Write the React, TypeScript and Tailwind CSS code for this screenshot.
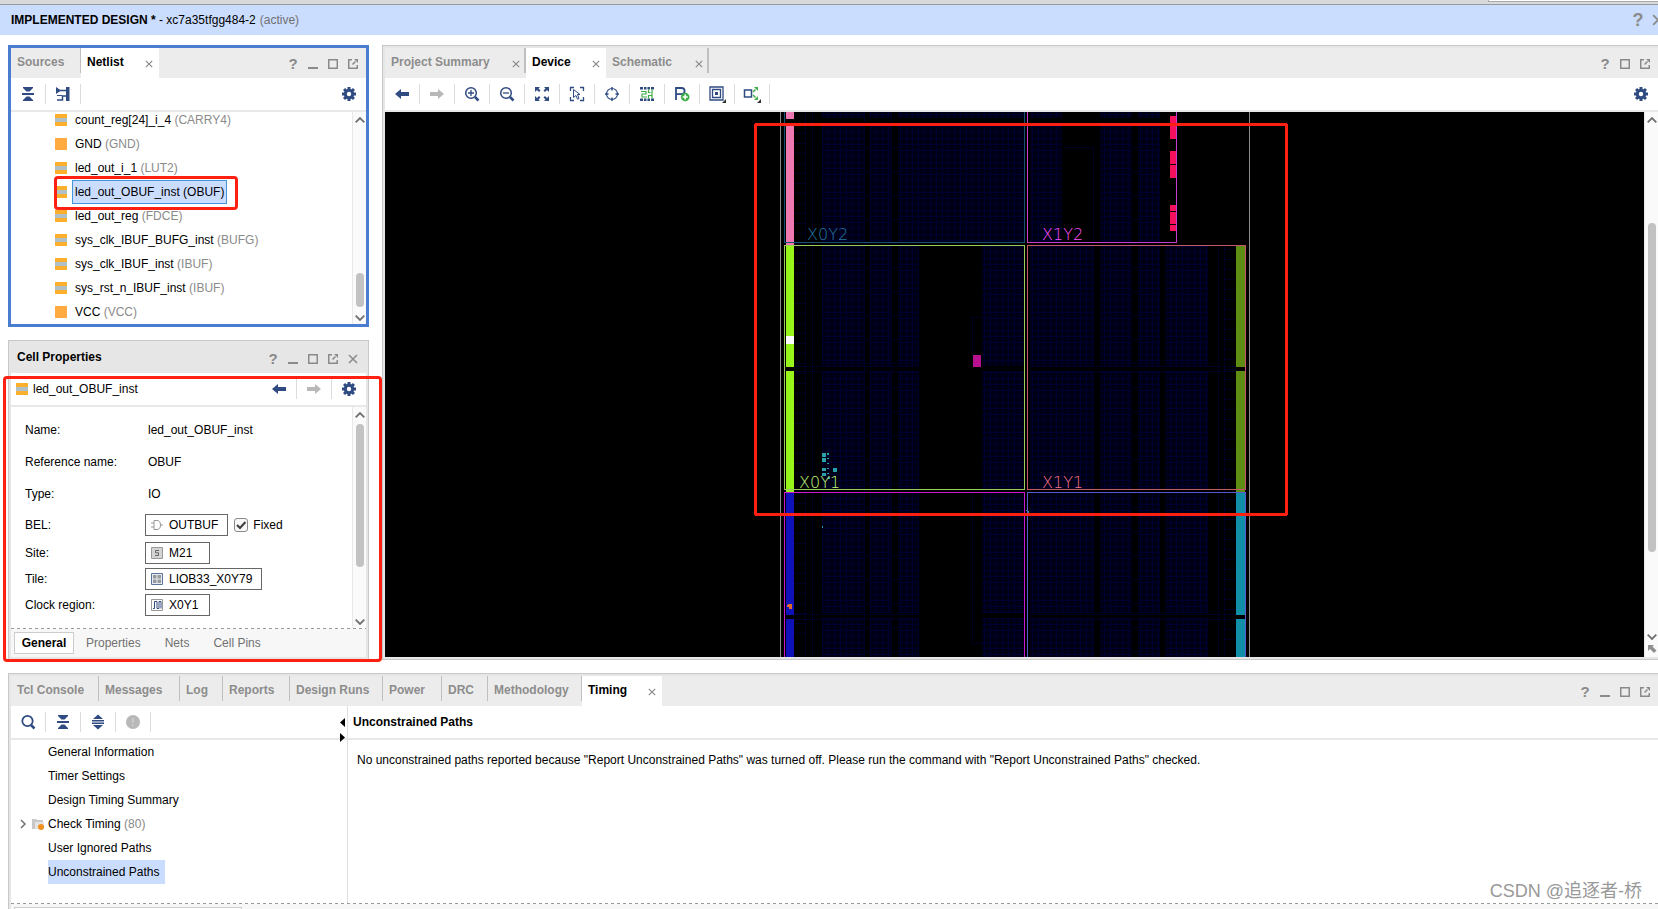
import { useState } from 'react'
import type { ReactNode } from 'react'

type Cell = { name: string; type: string; plain?: boolean }
type TabItem = { label: string; width: string; close?: boolean }
type Rect = [x: number, y: number, w: number, h: number]

const cells: Cell[] = [
  { name: 'count_reg[24]_i_4', type: 'CARRY4' },
  { name: 'GND', type: 'GND', plain: true },
  { name: 'led_out_i_1', type: 'LUT2' },
  { name: 'led_out_OBUF_inst', type: 'OBUF' },
  { name: 'led_out_reg', type: 'FDCE' },
  { name: 'sys_clk_IBUF_BUFG_inst', type: 'BUFG' },
  { name: 'sys_clk_IBUF_inst', type: 'IBUF' },
  { name: 'sys_rst_n_IBUF_inst', type: 'IBUF' },
  { name: 'VCC', type: 'VCC', plain: true },
]

const netlistTabs: TabItem[] = [
  { label: 'Sources', width: 'w-[70px]' },
  { label: 'Netlist', width: 'w-[78px]', close: true },
]

const deviceTabs: TabItem[] = [
  { label: 'Project Summary', width: 'w-[141px]', close: true },
  { label: 'Device', width: 'w-[80px]', close: true },
  { label: 'Schematic', width: 'w-[103px]', close: true },
]

const resultTabs: TabItem[] = [
  { label: 'Tcl Console', width: 'w-[88px]' },
  { label: 'Messages', width: 'w-[81px]' },
  { label: 'Log', width: 'w-[43px]' },
  { label: 'Reports', width: 'w-[67px]' },
  { label: 'Design Runs', width: 'w-[93px]' },
  { label: 'Power', width: 'w-[59px]' },
  { label: 'DRC', width: 'w-[46px]' },
  { label: 'Methodology', width: 'w-[94px]' },
  { label: 'Timing', width: 'w-[80px]', close: true },
]

const timingItems = [
  'General Information',
  'Timer Settings',
  'Design Timing Summary',
  'Check Timing',
  'User Ignored Paths',
  'Unconstrained Paths',
]

const NAVY = '#2f4b82'
const GREEN = '#3fae49'

/* ---------- icons ---------- */

function Icon({ size = 16, children }: { size?: number; children: ReactNode }) {
  return (
    <svg width={size} height={size} viewBox={`0 0 ${size} ${size}`} fill="none" aria-hidden="true">
      {children}
    </svg>
  )
}

const GearIcon = () => (
  <Icon>
    <g fill={NAVY}>
      <circle cx="8" cy="8" r="5.2" />
      {[0, 45, 90, 135].map(a => (
        <rect key={a} x="6.5" y="1" width="3" height="14" transform={`rotate(${a} 8 8)`} />
      ))}
    </g>
    <circle cx="8" cy="8" r="2.2" fill="#fff" />
  </Icon>
)

const CollapseIcon = () => (
  <Icon>
    <path d="M3 1h10v1L9.500 5.500h-3L3 2zM3 15h10v-1L9.500 10.500h-3L3 14zM2 7h12v2H2z" fill={NAVY} />
  </Icon>
)

const ExpandIcon = () => (
  <Icon>
    <path d="M8 .5l5 4.500H3zM8 15.500l5-4.500H3zM2 6h12v1.500H2zM2 8.500h12V10H2z" fill={NAVY} />
  </Icon>
)

const HierarchyIcon = () => (
  <Icon>
    <path d="M1 1l5 3.500L1 8z" fill={NAVY} />
    <path d="M11 1h3.500v14H11z" fill={NAVY} />
    <path d="M5 4.500h6M2 14h5.500v-4H11" stroke={NAVY} strokeWidth="1.500" />
    <path d="M2 9.500h5" stroke={NAVY} />
  </Icon>
)

const BackIcon = () => (
  <Icon>
    <path d="M1 8l6-5v3h8v4H7v3z" fill={NAVY} />
  </Icon>
)

const ForwardIcon = () => (
  <Icon>
    <path d="M15 8L9 3v3H1v4h8v3z" fill="#b8b8b8" />
  </Icon>
)

const ZoomIcon = ({ plus }: { plus?: boolean }) => (
  <Icon>
    <circle cx="7" cy="7" r="5.300" stroke={NAVY} strokeWidth="1.500" />
    <path d="M11 11l3.500 3.500" stroke={NAVY} strokeWidth="2.500" />
    <path d={plus ? 'M4 7h6M7 4v6' : 'M4 7h6'} stroke={NAVY} strokeWidth="1.300" />
  </Icon>
)

const FitIcon = () => (
  <Icon>
    <path d="M1 1h5L4.500 2.500l2 2-1.500 1.500-2-2L1 6zM15 1h-5l1.500 1.500-2 2L11 6l2-2 2 2zM1 15h5l-1.500-1.500 2-2L5 10l-2 2-2-2zM15 15h-5l1.500-1.500-2-2L11 10l2 2 2-2z" fill={NAVY} />
  </Icon>
)

const SelectAreaIcon = () => (
  <Icon>
    <path d="M1.500 5V1.500H5M11 1.500h3.500V5M1.500 11v3.500H5M14.500 11v3.500H11" stroke={NAVY} strokeWidth="1.300" />
    <path d="M4.500 3.500l6.500 5H8.500l1.500 4-1.500.7L7 9.500l-2.500 2z" stroke={NAVY} fill="#fff" />
  </Icon>
)

const TargetIcon = () => (
  <Icon>
    <circle cx="8" cy="8" r="5.500" stroke={NAVY} strokeWidth="1.200" />
    <path d="M8 1v3.500M8 11.500V15M1 8h3.500M11.500 8H15" stroke={NAVY} strokeWidth="1.500" />
  </Icon>
)

// two routed wires between the rows of pins
const RoutingIcon = () => (
  <Icon>
    <path d="M1 1h3v2.500H1zM5 1h2.500v2.500H5zM8.500 1H11v2.500H8.500zM12 1h3v2.500h-3zM1 12.500h3V15H1zM5 12.500h2.500V15H5zM8.500 12.500H11V15H8.500zM12 12.500h3V15h-3z" fill={NAVY} />
    <path d="M2 5.500h5V8H3v3h5M9.500 3.500v3h2M13 3.500v9M9.500 12.500V9.500H13" stroke={GREEN} strokeWidth="1.200" />
  </Icon>
)

const PblockIcon = () => (
  <Icon>
    <path d="M2 14V2h5.500a3 3 0 010 6.200H2" stroke={NAVY} strokeWidth="1.800" />
    <circle cx="11.200" cy="11" r="4.300" fill={GREEN} />
    <path d="M8.700 11h5M11.200 8.500v5" stroke="#fff" strokeWidth="1.500" />
  </Icon>
)

const LayersIcon = () => (
  <Icon size={18}>
    <path d="M2 2h13v13H2zM4.500 4.500h8v8h-8z" stroke={NAVY} strokeWidth="1.300" />
    <path d="M7 7h3v3H7z" fill={NAVY} />
    <path d="M18 14v4h-4z" fill="#333" />
  </Icon>
)

const ConnectIcon = () => (
  <Icon size={18}>
    <path d="M1.500 5h7v7h-7z" stroke={NAVY} strokeWidth="1.500" />
    <path d="M10 7l2.500-2.500M10 10l2.500 2.500" stroke={GREEN} strokeWidth="1.500" />
    <path d="M15 2v4l-4-4zM15 15v-4l-4 4z" fill={GREEN} />
    <path d="M18 14v4h-4z" fill="#333" />
  </Icon>
)

const SearchIcon = () => (
  <Icon>
    <circle cx="7.500" cy="7" r="5.200" stroke={NAVY} strokeWidth="1.800" />
    <path d="M11 11l3.500 3.500" stroke={NAVY} strokeWidth="2.500" />
  </Icon>
)

const AlertIcon = () => (
  <Icon>
    <circle cx="8" cy="8" r="7" fill="#b8b8b8" />
    <path d="M8 4v5M8 10.500v1.500" stroke="#d0d0d0" strokeWidth="1.500" />
  </Icon>
)

const CellIcon = ({ plain }: { plain?: boolean }) => (
  <Icon size={12}>
    <path d="M0 0h12v12H0z" fill={plain ? '#ffab40' : '#fbb02d'} />
    {!plain && <path d="M0 4h12v4H0z" fill="#b0c0c8" />}
  </Icon>
)

const BelIcon = () => (
  <Icon size={12}>
    <path d="M3 1.500h3a3.500 4.500 0 010 9H3zM0 4h3M0 8h3M9.500 6H12" stroke="#999" />
  </Icon>
)

const SiteIcon = () => (
  <Icon size={12}>
    <path d="M.5.5h11v11H.5z" fill="#d4d4d4" stroke="#999" />
    <path d="M8 3.500H4.500v2.300h3v2.700H4" stroke="#666" />
  </Icon>
)

const TileIcon = () => (
  <Icon size={12}>
    <path d="M.5.5h11v11H.5z" fill="#e6ecf5" stroke="#5b7299" />
    <path d="M2 2h3.500v3.500H2zM6.500 2H10v3.500H6.500zM2 6.500h3.500V10H2zM6.500 6.500H10V10H6.500z" fill="#999" />
  </Icon>
)

const ClockIcon = () => (
  <Icon size={12}>
    <path d="M.5.5h11v11H.5z" stroke="#999" />
    <path d="M2 9.500h1.500v-7H6v7h2v-7h2v7" stroke={NAVY} />
  </Icon>
)

const FolderIcon = () => (
  <Icon size={12}>
    <path d="M0 1h4l1 1h6v9H0z" fill="#c8c8c8" />
    <path d="M3 4h9v7H3z" fill="#e4e4e4" />
    <circle cx="9" cy="9" r="3" fill="#f0901e" />
  </Icon>
)

const CloseIcon = ({ size = 10 }: { size?: number }) => (
  <svg width={size} height={size} viewBox="0 0 10 10" className="shrink-0" aria-hidden="true">
    <path d="M1 1l8 8M9 1L1 9" stroke="#8a8a8a" strokeWidth="1.500" />
  </svg>
)

const MinimizeIcon = () => (
  <Icon size={10}>
    <path d="M0 9h10" stroke="#8a8a8a" strokeWidth="2" />
  </Icon>
)

const MaximizeIcon = () => (
  <Icon size={10}>
    <path d="M.75.75h8.500v8.500H.75z" stroke="#8a8a8a" strokeWidth="1.500" />
  </Icon>
)

const FloatIcon = () => (
  <Icon size={10}>
    <path d="M4 .75H.75v8.500h8.500V6M4.500 5.500L7.500 2.500" stroke="#8a8a8a" strokeWidth="1.500" />
    <path d="M6 0h4v4z" fill="#8a8a8a" />
  </Icon>
)

const Chevron = ({ down }: { down?: boolean }) => (
  <svg width="10" height="6" viewBox="0 0 10 6" fill="none" aria-hidden="true">
    <path d={down ? 'M.7.7L5 5 9.300.7' : 'M.7 5.300L5 1l4.300 4.300'} stroke="#707070" strokeWidth="1.800" />
  </svg>
)

/* ---------- shared parts ---------- */

function ToolButton({ label, children, last }: { label: string; children: ReactNode; last?: boolean }) {
  return (
    <button
      type="button"
      aria-label={label}
      className={`flex h-5 shrink-0 items-center justify-center ${last ? 'w-[34px]' : 'w-[35px] border-r border-[#dcdcdc]'}`}
    >
      {children}
    </button>
  )
}

function WindowButtons({ minimize, close }: { minimize?: boolean; close?: boolean }) {
  const button = 'flex h-5 w-5 items-center justify-center'
  return (
    <div className="ml-auto flex items-center pt-0.5 pr-[3px]">
      <button type="button" className={`${button} text-[15px] font-bold text-[#8a8a8a]`}>?</button>
      {minimize && <button type="button" aria-label="Minimize" className={button}><MinimizeIcon /></button>}
      <button type="button" aria-label="Maximize" className={button}><MaximizeIcon /></button>
      <button type="button" aria-label="Float" className={button}><FloatIcon /></button>
      {close && <button type="button" aria-label="Close" className={button}><CloseIcon /></button>}
    </div>
  )
}

function TabBar({ tabs, initial, minimize, divider }: { tabs: TabItem[]; initial: string; minimize?: boolean; divider: string }) {
  const [active, setActive] = useState(initial)
  return (
    <div className="flex h-[30px] shrink-0 bg-[#ececec]">
      {tabs.map(tab => {
        const isActive = tab.label === active
        return (
          <div key={tab.label} className={`relative flex h-[30px] shrink-0 ${tab.width} ${isActive ? 'bg-white' : ''}`}>
            <button
              type="button"
              onClick={() => setActive(tab.label)}
              className={`h-[27px] flex-1 pl-1.5 text-left font-bold whitespace-nowrap ${isActive ? 'text-black' : 'text-[#8c8c8c]'}`}
            >
              {tab.label}
            </button>
            {tab.close && (
              <button type="button" aria-label="Close tab" className="flex w-5 items-center justify-center pt-0.5">
                <CloseIcon size={8} />
              </button>
            )}
            {!isActive && <span className={`absolute top-0 right-0 h-[25px] bg-[#c0c0c0] ${divider}`} />}
          </div>
        )
      })}
      <WindowButtons minimize={minimize} />
    </div>
  )
}

function ScrollBar({ thumb, children }: { thumb: string; children?: ReactNode }) {
  return (
    <div className="flex w-3.5 shrink-0 flex-col items-center border-l border-[#e8e8e8] bg-[#fafafa]">
      <button type="button" aria-label="Scroll up" className="flex h-4 shrink-0 items-center"><Chevron /></button>
      <div className={`w-2 shrink-0 rounded-full bg-[#c2c2c2] ${thumb}`} />
      <button type="button" aria-label="Scroll down" className="mt-auto flex h-3 shrink-0 items-center"><Chevron down /></button>
      {children}
    </div>
  )
}

const DashedLine = () => (
  <div className="h-px shrink-0 bg-[repeating-linear-gradient(90deg,#999_0_3px,transparent_3px_6px)]" />
)

/* ---------- panels ---------- */

function NetlistPanel() {
  const [selected, setSelected] = useState('led_out_OBUF_inst')
  return (
    <section className="relative flex h-[282px] shrink-0 flex-col border-3 border-[#4a7dd0] bg-white">
      <TabBar tabs={netlistTabs} initial="Netlist" minimize divider="w-px" />
      <div className="flex h-[34px] shrink-0 items-center border-b-2 border-[#e8e8e8]">
        <ToolButton label="Collapse all"><CollapseIcon /></ToolButton>
        <ToolButton label="Show hierarchy"><HierarchyIcon /></ToolButton>
        <div className="flex-1" />
        <ToolButton label="Settings" last><GearIcon /></ToolButton>
      </div>
      <div className="flex min-h-0 flex-1">
        <ul className="flex flex-1 flex-col justify-end overflow-hidden">
          {cells.map(cell => {
            const isSelected = cell.name === selected
            return (
              <li key={cell.name} className="flex h-6 shrink-0 items-center pl-11">
                <CellIcon plain={cell.plain} />
                <button
                  type="button"
                  onClick={() => setSelected(cell.name)}
                  className={`ml-[5px] h-6 border px-0.5 whitespace-nowrap ${isSelected ? 'border-[#4596d8] bg-[#cbddff]' : 'border-transparent'}`}
                >
                  {cell.name} <span className={isSelected ? '' : 'text-[#8a8a8a]'}>({cell.type})</span>
                </button>
              </li>
            )
          })}
        </ul>
        <ScrollBar thumb="mt-[145px] h-[34px]" />
      </div>
      <div className="pointer-events-none absolute top-32 left-[43px] h-[34px] w-[184px] rounded-sm border-3 border-[#ff2012]" />
    </section>
  )
}

function LocationBox({ icon, text }: { icon: ReactNode; text: string }) {
  return (
    <button type="button" className="flex h-[22px] min-w-[65px] items-center gap-1.5 border border-[#666] pr-[9px] pl-[5px]">
      {icon}
      {text}
    </button>
  )
}

function CellPropertiesPanel() {
  const [fixed, setFixed] = useState(true)
  const [tab, setTab] = useState('General')
  const label = 'w-[123px] shrink-0'
  return (
    <section className="relative flex min-h-0 flex-1 flex-col border border-[#c8c8c8]">
      <div className="flex min-h-0 flex-1 flex-col border-2 border-[#e6e6e6] bg-white">
        <div className="flex h-[30px] shrink-0 items-center bg-[#e6e6e6]">
          <h2 className="pb-0.5 pl-1.5 font-bold">Cell Properties</h2>
          <WindowButtons minimize close />
        </div>
        <div className="flex h-[34px] shrink-0 items-center border-b-2 border-[#e8e8e8] pl-[5px]">
          <CellIcon />
          <span className="ml-[5px] flex-1">led_out_OBUF_inst</span>
          <ToolButton label="Previous"><BackIcon /></ToolButton>
          <ToolButton label="Next"><ForwardIcon /></ToolButton>
          <ToolButton label="Settings" last><GearIcon /></ToolButton>
        </div>
        <div className="flex min-h-0 flex-1">
          <div className="flex-1 overflow-hidden pt-[7px] pl-3.5">
            <div className="flex h-8 items-center"><span className={label}>Name:</span>led_out_OBUF_inst</div>
            <div className="flex h-8 items-center"><span className={label}>Reference name:</span>OBUF</div>
            <div className="flex h-8 items-center"><span className={label}>Type:</span>IO</div>
            <div className="flex h-[30px] items-center">
              <span className="w-30 shrink-0">BEL:</span>
              <LocationBox icon={<BelIcon />} text="OUTBUF" />
              <label className="ml-1.5 flex items-center gap-[5px]">
                <span className="grid size-3.5 place-items-center">
                  <input
                    type="checkbox"
                    checked={fixed}
                    onChange={e => setFixed(e.target.checked)}
                    className="col-start-1 row-start-1 size-3.5 appearance-none rounded-[3px] border border-[#8a8a8a] bg-[#f8f8f8]"
                  />
                  {fixed && (
                    <svg width="10" height="10" viewBox="0 0 10 10" fill="none" className="pointer-events-none col-start-1 row-start-1">
                      <path d="M1 5l3 3 5.500-6" stroke="#404040" strokeWidth="2.200" />
                    </svg>
                  )}
                </span>
                Fixed
              </label>
            </div>
            <div className="flex h-[26px] items-center">
              <span className="w-30 shrink-0">Site:</span>
              <LocationBox icon={<SiteIcon />} text="M21" />
            </div>
            <div className="flex h-[26px] items-center">
              <span className="w-30 shrink-0">Tile:</span>
              <LocationBox icon={<TileIcon />} text="LIOB33_X0Y79" />
            </div>
            <div className="flex h-[26px] items-center">
              <span className="w-30 shrink-0">Clock region:</span>
              <LocationBox icon={<ClockIcon />} text="X0Y1" />
            </div>
          </div>
          <ScrollBar thumb="mt-px h-[143px]" />
        </div>
        <DashedLine />
        <div className="flex h-7 shrink-0 items-center bg-[#f7f7f7] pl-[3px]">
          {['General', 'Properties', 'Nets', 'Cell Pins'].map(name => (
            <button
              key={name}
              type="button"
              onClick={() => setTab(name)}
              className={name === tab ? 'h-[22px] min-w-[60px] border border-[#ccc] bg-white px-1.5 font-bold' : 'h-[22px] px-3 text-[#707070]'}
            >
              {name}
            </button>
          ))}
        </div>
      </div>
      <div className="pointer-events-none absolute top-[35px] -right-3.5 -bottom-[3px] -left-1.5 z-10 rounded-sm border-3 border-[#ff2012]" />
    </section>
  )
}

// fabric columns of the die, split per clock region row
const rows: [number, number][] = [[112, 6], [126, 116], [246, 120], [371, 118], [493, 120], [618, 39]]
const leftCols: [number, number][] = [[822, 43], [870, 22], [898, 21], [982, 42]]
const rightCols: [number, number][] = [[1030, 64], [1100, 32], [1138, 22], [1165, 43]]
const topCols: [number, number][] = [[822, 43], [870, 22], [898, 126], [1030, 32], [1100, 32], [1138, 22]]

const tealCells: Rect[] = [
  [822, 453, 4, 4], [822, 458, 4, 4], [822, 468, 4, 3], [822, 473, 4, 3],
  [827, 453, 2, 2], [827, 458, 2, 1], [827, 463, 2, 1], [827, 468, 2, 1], [827, 473, 2, 1],
  [833, 468, 4, 4], [828, 477, 2, 2], [822, 526, 1, 2], [1026, 510, 1, 1], [1027, 511, 2, 2],
]
const redCells: Rect[] = [
  [1170, 116, 6, 23], [1170, 151, 6, 13], [1170, 165, 6, 13],
  [1170, 205, 6, 6], [1170, 212, 6, 12], [1170, 225, 6, 6],
]
const ioBanks: { rect: Rect; fill: string }[] = [
  { rect: [786, 112, 8, 7], fill: '#f078b0' },
  { rect: [786, 123, 8, 122], fill: '#f078b0' },
  { rect: [786, 245, 8, 122], fill: '#98f51a' },
  { rect: [786, 371, 8, 121], fill: '#98f51a' },
  { rect: [786, 336, 8, 8], fill: '#ffffff' },
  { rect: [786, 492, 8, 123], fill: '#1010b8' },
  { rect: [786, 619, 8, 38], fill: '#1010b8' },
  { rect: [1236, 245, 9, 122], fill: '#5f8c12' },
  { rect: [1236, 371, 9, 121], fill: '#5f8c12' },
  { rect: [1236, 492, 9, 123], fill: '#118fa9' },
  { rect: [1236, 619, 9, 38], fill: '#118fa9' },
  { rect: [973, 355, 8, 12], fill: '#b8108e' },
]
const clockRegions: { rect: Rect; stroke: string }[] = [
  { rect: [784, 100, 240, 142], stroke: '#145070' },
  { rect: [1027, 100, 149, 142], stroke: '#cc3ccc' },
  { rect: [784, 245, 240, 244], stroke: '#9bcc5a' },
  { rect: [1027, 245, 218, 244], stroke: '#c4586a' },
  { rect: [784, 492, 240, 200], stroke: '#cc18cc' },
  { rect: [1027, 492, 218, 200], stroke: '#5858d0' },
]
const regionLabels = [
  { text: 'X0Y2', x: 807, y: 240, fill: '#2478a4' },
  { text: 'X1Y2', x: 1042, y: 240, fill: '#ff50ff' },
  { text: 'X0Y1', x: 799, y: 488, fill: '#c0f878' },
  { text: 'X1Y1', x: 1042, y: 488, fill: '#f87088' },
]

function Die() {
  return (
    <svg width="549" height="545" viewBox="740 112 549 545" className="shrink-0" shapeRendering="crispEdges">
      <defs>
        <pattern id="clb" width="6" height="6" patternUnits="userSpaceOnUse">
          <path d="M0 0h6v6H0z" fill="#000014" />
          <path d="M0 0h6v1H1v5H0z" fill="#000030" />
        </pattern>
      </defs>
      {rows.map(([y, h], i) =>
        (i < 2 ? topCols : [...leftCols, ...rightCols]).map(([x, w]) => (
          <rect key={`${x}-${y}`} x={x} y={y} width={w} height={h} fill="url(#clb)" />
        ))
      )}
      <g stroke="#000026">
        <path d="M805.500 112v545M812.500 112v545M864.500 112v545M891.500 112v545" />
        <path d="M1218.500 246v411M1224.500 246v411M972.500 355v-38h9M972.500 493v150h9" />
        <path d="M794 366.500h125M794 371.500h125M794 614.500h125M794 619.500h125M1030 366.500h206M1030 371.500h206M1030 614.500h206M1030 619.500h206" />
        <path d="M1063.500 147.500h30v95" fill="none" />
        {Array.from({ length: 52 }, (_, i) => (
          <path key={i} d={`M795 ${123.5 + i * 10}h10`} />
        ))}
        {Array.from({ length: 40 }, (_, i) => (
          <path key={i} d={`M1225 ${249.5 + i * 10}h10`} />
        ))}
        {Array.from({ length: 22 }, (_, i) => (
          <path key={i} d={`M865 ${147.5 + i * 24}h5M892 ${147.5 + i * 24}h6M1132 ${147.5 + i * 24}h6`} />
        ))}
      </g>
      <path d="M780.500 112v545M1249.500 112v545" stroke="#888" />
      {ioBanks.map(({ rect: [x, y, w, h], fill }) => (
        <rect key={`${x}-${y}`} x={x} y={y} width={w} height={h} fill={fill} />
      ))}
      {redCells.map(([x, y, w, h]) => (
        <rect key={y} x={x} y={y} width={w} height={h} fill="#f5105e" />
      ))}
      {tealCells.map(([x, y, w, h]) => (
        <rect key={`${x}-${y}`} x={x} y={y} width={w} height={h} fill="#2aa0a8" />
      ))}
      <path d="M788 604h4v5h-3v-2h-2v-2h1z" fill="#e06a28" />
      {clockRegions.map(({ rect: [x, y, w, h], stroke }) => (
        <rect key={`${x}-${y}`} x={x + 0.5} y={y + 0.5} width={w} height={h} fill="none" stroke={stroke} />
      ))}
      {regionLabels.map(({ text, x, y, fill }) => (
        <text key={text} x={x} y={y} fill={fill} className="font-['DejaVu_Sans'] text-[16px] font-extralight">{text}</text>
      ))}
      <rect x="755.500" y="124.500" width="531" height="390" rx="1" fill="none" stroke="#ff2012" strokeWidth="3" />
    </svg>
  )
}

function DevicePanel() {
  return (
    <section className="flex min-w-0 flex-1 flex-col border border-r-0 border-[#c8c8c8]">
      <div className="flex min-h-0 flex-1 flex-col border-2 border-r-0 border-[#e6e6e6] bg-white">
        <TabBar tabs={deviceTabs} initial="Device" divider="w-0.5" />
        <div className="flex h-[34px] shrink-0 items-center border-b-2 border-[#e8e8e8]">
          <ToolButton label="Back"><BackIcon /></ToolButton>
          <ToolButton label="Forward"><ForwardIcon /></ToolButton>
          <ToolButton label="Zoom in"><ZoomIcon plus /></ToolButton>
          <ToolButton label="Zoom out"><ZoomIcon /></ToolButton>
          <ToolButton label="Zoom fit"><FitIcon /></ToolButton>
          <ToolButton label="Select area"><SelectAreaIcon /></ToolButton>
          <ToolButton label="Auto-fit selection"><TargetIcon /></ToolButton>
          <ToolButton label="Routing resources"><RoutingIcon /></ToolButton>
          <ToolButton label="Draw Pblock"><PblockIcon /></ToolButton>
          <ToolButton label="Layers"><LayersIcon /></ToolButton>
          <ToolButton label="Show connections"><ConnectIcon /></ToolButton>
          <div className="flex-1" />
          <ToolButton label="Settings" last><GearIcon /></ToolButton>
        </div>
        <div className="flex min-h-0 flex-1">
          <div className="flex min-w-0 flex-1 justify-center overflow-hidden bg-black">
            <Die />
          </div>
          <ScrollBar thumb="mt-[95px] h-[329px]">
            <svg width="10" height="14" viewBox="0 0 10 14" className="shrink-0" aria-hidden="true">
              <path d="M1 2h6L5.500 3.500l4 4-2.500 2.500-4-4L1 8z" fill="#8f8f8f" />
            </svg>
          </ScrollBar>
        </div>
      </div>
    </section>
  )
}

function TimingPanel() {
  const [selected, setSelected] = useState('Unconstrained Paths')
  return (
    <section className="ml-2 flex h-[236px] shrink-0 flex-col border-t border-l border-[#c8c8c8]">
      <div className="flex min-h-0 flex-1 flex-col border-t-2 border-l-2 border-[#e6e6e6] bg-white">
        <TabBar tabs={resultTabs} initial="Timing" minimize divider="w-px" />
        <div className="flex min-h-0 flex-1">
          <div className="relative flex w-[337px] shrink-0 flex-col border-r border-[#e0e0e0]">
            <div className="flex h-[34px] shrink-0 items-center border-b-2 border-[#e8e8e8]">
              <ToolButton label="Search"><SearchIcon /></ToolButton>
              <ToolButton label="Collapse all"><CollapseIcon /></ToolButton>
              <ToolButton label="Expand all"><ExpandIcon /></ToolButton>
              <ToolButton label="Messages"><AlertIcon /></ToolButton>
            </div>
            <svg width="6" height="24" viewBox="0 0 6 24" className="absolute top-3 right-0.5" aria-hidden="true">
              <path d="M6 0v9L1 4.500zM1 15v9l5-4.500z" />
            </svg>
            <ul>
              {timingItems.map(item => (
                <li key={item} className="flex h-6 items-center">
                  <span className="flex w-[37px] items-center justify-end gap-1.5 pr-1">
                    {item === 'Check Timing' && (
                      <>
                        <svg width="6" height="10" viewBox="0 0 6 10" fill="none" aria-hidden="true">
                          <path d="M1 1l4 4-4 4" stroke="#707070" strokeWidth="1.500" />
                        </svg>
                        <FolderIcon />
                      </>
                    )}
                  </span>
                  <button
                    type="button"
                    onClick={() => setSelected(item)}
                    className={`h-6 pr-1.5 ${item === selected ? 'bg-[#cbddff]' : ''}`}
                  >
                    {item}
                    {item === 'Check Timing' && <span className="text-[#8a8a8a]"> (80)</span>}
                  </button>
                </li>
              ))}
            </ul>
          </div>
          <div className="min-w-0 flex-1">
            <h2 className="flex h-[34px] items-center border-b-2 border-[#e8e8e8] pl-[5px] font-bold">Unconstrained Paths</h2>
            <p className="pt-3 pl-[9px]">
              No unconstrained paths reported because "Report Unconstrained Paths" was turned off. Please run the command with "Report Unconstrained Paths" checked.
            </p>
          </div>
        </div>
        <DashedLine />
        <div className="h-[5px] shrink-0 bg-[#f7f7f7] pt-[3px] pl-[3px]">
          <div className="h-0.5 w-[228px] border border-b-0 border-[#ccc] bg-white" />
        </div>
      </div>
    </section>
  )
}

export default function App() {
  return (
    <div className="relative flex h-screen flex-col overflow-hidden bg-white font-['Liberation_Sans','Noto_Sans_CJK_SC',sans-serif] text-[12px] leading-4 text-black">
      <div className="flex h-[5px] shrink-0 items-start justify-end border-b border-[#999] bg-[#d9d9d9]">
        <div className="h-0.5 w-[170px] border-b border-l border-[#aaa] bg-white" />
      </div>
      <header className="flex h-[30px] shrink-0 items-center bg-[#cbddff] pl-[11px]">
        <h1>
          <b>IMPLEMENTED DESIGN *</b> - xc7a35tfgg484-2
        </h1>
        <span className="ml-1 text-[#707070]">(active)</span>
        <button type="button" className="ml-auto w-5 text-[18px] font-bold text-[#8a8a8a]">?</button>
        <button type="button" aria-label="Close" className="-mr-1.5 ml-1 shrink-0"><CloseIcon size={12} /></button>
      </header>

      <main className="flex min-h-0 flex-1 gap-[13px] pt-2.5 pb-[13px] pl-2">
        <div className="flex w-[361px] shrink-0 flex-col gap-[13px]">
          <NetlistPanel />
          <CellPropertiesPanel />
        </div>
        <DevicePanel />
      </main>

      <TimingPanel />

      <div className="pointer-events-none absolute right-4 bottom-1.5 text-[18px] leading-6 text-[#999]">CSDN @追逐者-桥</div>
    </div>
  )
}
